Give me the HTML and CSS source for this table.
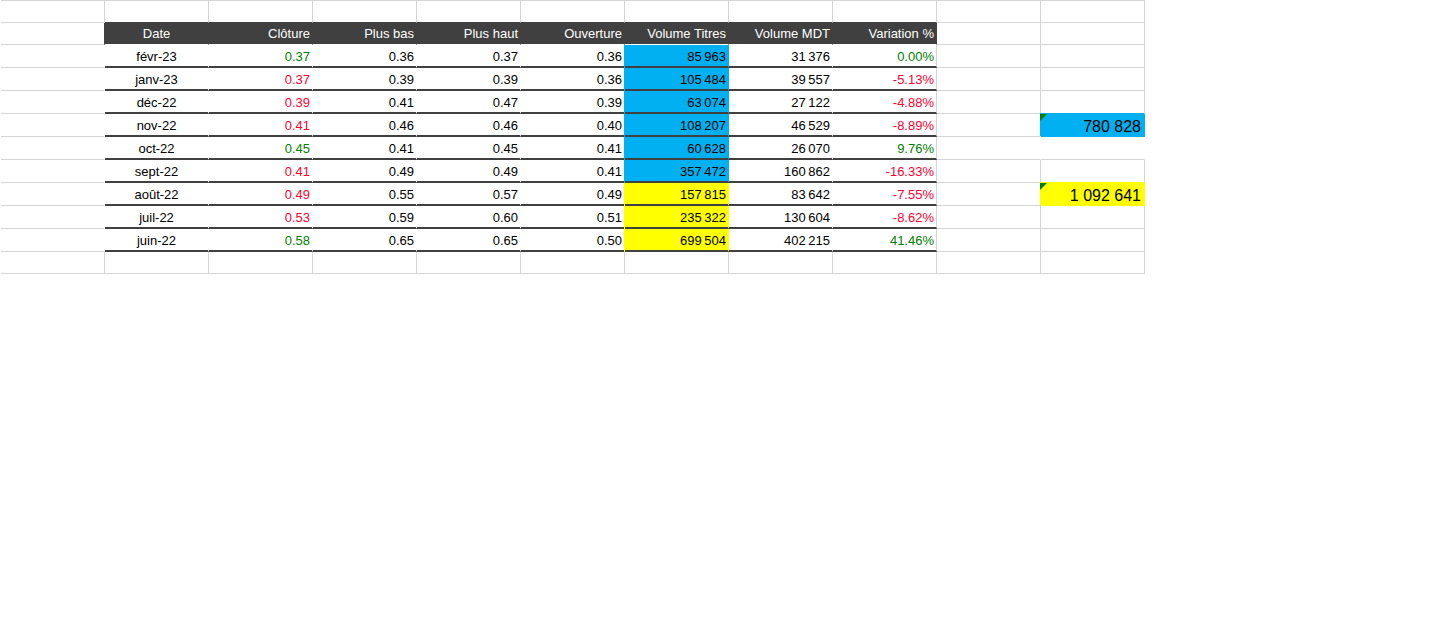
FILE: index.html
```html
<!DOCTYPE html>
<html lang="fr">
<head>
<meta charset="utf-8">
<title>Cours</title>
<link rel="stylesheet" href="styles.css">
</head>
<body>
<div class="sheet">
  <!-- row 1 -->
  <div class="c"></div>
  <div class="c top"></div><div class="c top"></div><div class="c top"></div><div class="c top"></div>
  <div class="c top"></div><div class="c top"></div><div class="c top"></div><div class="c top"></div>
  <div class="c"></div><div class="c"></div>

  <!-- header -->
  <div class="c hd-a"></div>
  <div class="c hd ctr">Date</div>
  <div class="c hd">Clôture</div>
  <div class="c hd">Plus bas</div>
  <div class="c hd">Plus haut</div>
  <div class="c hd">Ouverture</div>
  <div class="c hd">Volume Titres</div>
  <div class="c hd">Volume MDT</div>
  <div class="c hd">Variation %</div>
  <div class="c"></div><div class="c"></div>

  <!-- févr-23 -->
  <div class="c a"></div>
  <div class="c t ctr">févr-23</div>
  <div class="c t g">0.37</div>
  <div class="c t">0.36</div>
  <div class="c t">0.37</div>
  <div class="c t">0.36</div>
  <div class="c t n blue">85 963</div>
  <div class="c t n">31 376</div>
  <div class="c t last g">0.00%</div>
  <div class="c"></div><div class="c"></div>

  <!-- janv-23 -->
  <div class="c a"></div>
  <div class="c t ctr">janv-23</div>
  <div class="c t r">0.37</div>
  <div class="c t">0.39</div>
  <div class="c t">0.39</div>
  <div class="c t">0.36</div>
  <div class="c t n blue">105 484</div>
  <div class="c t n">39 557</div>
  <div class="c t last r">-5.13%</div>
  <div class="c"></div><div class="c"></div>

  <!-- déc-22 -->
  <div class="c a"></div>
  <div class="c t ctr">déc-22</div>
  <div class="c t r">0.39</div>
  <div class="c t">0.41</div>
  <div class="c t">0.47</div>
  <div class="c t">0.39</div>
  <div class="c t n blue">63 074</div>
  <div class="c t n">27 122</div>
  <div class="c t last r">-4.88%</div>
  <div class="c"></div><div class="c"></div>

  <!-- nov-22 -->
  <div class="c a"></div>
  <div class="c t ctr">nov-22</div>
  <div class="c t r">0.41</div>
  <div class="c t">0.46</div>
  <div class="c t">0.46</div>
  <div class="c t">0.40</div>
  <div class="c t n blue">108 207</div>
  <div class="c t n">46 529</div>
  <div class="c t last r">-8.89%</div>
  <div class="c"></div>
  <div class="c big big-blue">780 828</div>

  <!-- oct-22 -->
  <div class="c a"></div>
  <div class="c t ctr">oct-22</div>
  <div class="c t g">0.45</div>
  <div class="c t">0.41</div>
  <div class="c t">0.45</div>
  <div class="c t">0.41</div>
  <div class="c t n blue">60 628</div>
  <div class="c t n">26 070</div>
  <div class="c t last g">9.76%</div>
  <div class="c blank"></div><div class="c blank"></div>

  <!-- sept-22 -->
  <div class="c a"></div>
  <div class="c t ctr">sept-22</div>
  <div class="c t r">0.41</div>
  <div class="c t">0.49</div>
  <div class="c t">0.49</div>
  <div class="c t">0.41</div>
  <div class="c t n blue">357 472</div>
  <div class="c t n">160 862</div>
  <div class="c t last r">-16.33%</div>
  <div class="c"></div><div class="c"></div>

  <!-- août-22 -->
  <div class="c a"></div>
  <div class="c t ctr">août-22</div>
  <div class="c t r">0.49</div>
  <div class="c t">0.55</div>
  <div class="c t">0.57</div>
  <div class="c t">0.49</div>
  <div class="c t n yel">157 815</div>
  <div class="c t n">83 642</div>
  <div class="c t last r">-7.55%</div>
  <div class="c"></div>
  <div class="c big big-yel">1 092 641</div>

  <!-- juil-22 -->
  <div class="c a"></div>
  <div class="c t ctr">juil-22</div>
  <div class="c t r">0.53</div>
  <div class="c t">0.59</div>
  <div class="c t">0.60</div>
  <div class="c t">0.51</div>
  <div class="c t n yel">235 322</div>
  <div class="c t n">130 604</div>
  <div class="c t last r">-8.62%</div>
  <div class="c"></div><div class="c"></div>

  <!-- juin-22 -->
  <div class="c a"></div>
  <div class="c t ctr">juin-22</div>
  <div class="c t g">0.58</div>
  <div class="c t">0.65</div>
  <div class="c t">0.65</div>
  <div class="c t">0.50</div>
  <div class="c t n yel">699 504</div>
  <div class="c t n">402 215</div>
  <div class="c t last g">41.46%</div>
  <div class="c"></div><div class="c"></div>

  <!-- last empty row -->
  <div class="c"></div><div class="c"></div><div class="c"></div><div class="c"></div>
  <div class="c"></div><div class="c"></div><div class="c"></div><div class="c"></div>
  <div class="c"></div><div class="c"></div><div class="c"></div>
</div>
</body>
</html>
```

FILE: styles.css
```css
html, body {
  margin: 0;
  padding: 0;
  background: #fff;
}

body {
  font-family: "Liberation Sans", Arial, sans-serif;
  color: #000;
}

.sheet {
  display: grid;
  grid-template-columns: repeat(11, 104px);
  grid-template-rows: 22px 22px repeat(9, 23px) 22px;
  width: max-content;
  margin-left: 1px;
  border-top: 1px solid #d4d4d4;
}

.c {
  box-sizing: border-box;
  border-right: 1px solid #d4d4d4;
  border-bottom: 1px solid #d4d4d4;
  display: flex;
  align-items: flex-end;
  justify-content: flex-end;
  padding: 0 2px 2px 2px;
  font-size: 13px;
  line-height: 15px;
  white-space: nowrap;
}

.n {
  word-spacing: -1px;
}

.top {
  border-bottom-color: #404040;
}

.hd-a {
  border-right-color: #404040;
}

.hd {
  background: #404040;
  color: #fff;
  border-right-color: #404040;
  border-bottom-color: #fff;
  align-items: center;
  line-height: 21px;
  padding-bottom: 0;
}

.ctr {
  justify-content: center;
}

.a {
  border-right-color: #fff;
}

.t {
  border-right-color: #fff;
  border-bottom: 2px solid #404040;
}

.t.last {
  border-right-color: #d4d4d4;
}

.g {
  color: #008000;
}

.r {
  color: #ff0033;
}

.blue {
  background: #00b0f0;
  border-right-color: #00b0f0;
  box-shadow: -1px 0 0 0 #00b0f0;
}

.yel {
  background: #ffff00;
  border-right-color: #ffff00;
  box-shadow: -1px 0 0 0 #ffff00;
}

.blank {
  border-right-color: #fff;
}

.big {
  position: relative;
  font-size: 16px;
  line-height: 19px;
  padding: 0 3px 0 0;
}

.big::before {
  content: "";
  position: absolute;
  left: -1px;
  top: 0;
  width: 7px;
  height: 7px;
  background: #008000;
  clip-path: polygon(0 0, 100% 0, 0 100%);
}

.big-blue {
  background: #00b0f0;
  border-right-color: #00b0f0;
  border-bottom-color: #00b0f0;
  box-shadow: -1px -1px 0 0 #00b0f0;
}

.big-yel {
  background: #ffff00;
  border-right-color: #ffff00;
  border-bottom-color: #ffff00;
  box-shadow: -1px -1px 0 0 #ffff00;
}
```
